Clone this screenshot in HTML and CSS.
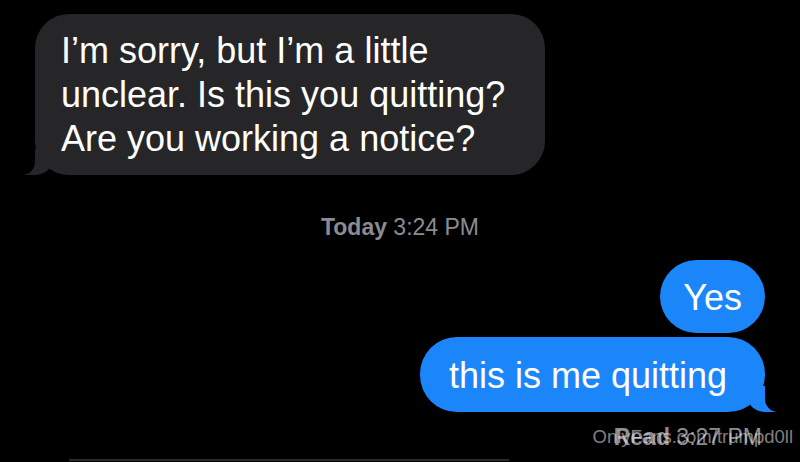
FILE: index.html
```html
<!DOCTYPE html>
<html>
<head>
    <link rel="stylesheet" href="styles.css">
</head>
<body>
    <div id="thread">
        <div class="bubble received tail">I’m sorry, but I’m a little unclear. Is this you quitting? Are you working a notice?</div>

        <p class="stamp"><b>Today</b> 3:24 PM</p>

        <div class="bubble sent yes">Yes</div>
        <div class="bubble sent tail quit">this is me quitting</div>

        <p class="receipt"><b>Read</b> 3:27 PM</p>

        <div class="next"></div>
    </div>

    <p id="watermark">OnlyFans.com/trumpd0ll</p>
</body>
</html>
```

FILE: styles.css
```css
body {
    background-color: #000;
    margin: 0;
    height: 462px;
    overflow: hidden;
    position: relative;
    font-family: "Liberation Sans", Arial, sans-serif;
}

#thread {
    display: flex;
    flex-direction: column;
    padding: 14px 35px 0 35px;
}

.bubble {
    position: relative;
    font-size: 36px;
    line-height: 44px;
    color: #fff;
    border-radius: 34px;
}

.received {
    align-self: flex-start;
    max-width: 510px;
    box-sizing: border-box;
    background-color: #262628;
    padding: 15px 34px 14px 26px;
}

.sent {
    align-self: flex-end;
    background-color: #1b86f9;
    border-radius: 37px;
}

/* tail: coloured blob, then a black blob with a rounded corner cuts it */
.tail::before,
.tail::after {
    content: "";
    position: absolute;
    bottom: 0;
    height: 26px;
}

.received.tail::before {
    left: -13px;
    width: 30px;
    background-color: #262628;
    border-bottom-right-radius: 18px 14px;
}

.received.tail::after {
    left: -32px;
    width: 32px;
    background-color: #000;
    border-bottom-right-radius: 13px;
}

.sent.tail::before {
    right: -13px;
    width: 30px;
    background-color: #1b86f9;
    border-bottom-left-radius: 18px 14px;
}

.sent.tail::after {
    right: -32px;
    width: 32px;
    background-color: #000;
    border-bottom-left-radius: 13px;
}

.stamp {
    align-self: center;
    margin: 38px 0 0 0;
    font-size: 23px;
    line-height: 28px;
    color: #8c8c90;
}

.stamp b,
.receipt b {
    font-weight: 700;
}

.yes {
    margin-top: 19px;
    padding: 16px 23px 13px 23px;
}

.quit {
    margin-top: 4px;
    padding: 17px 38px 14px 29px;
}

.receipt {
    align-self: flex-end;
    margin: 11px 3px 0 0;
    font-size: 23px;
    line-height: 28px;
    color: #8c8c90;
}

/* top edge of the next bubble, cut off by the screen */
.next {
    width: 440px;
    height: 2px;
    margin: 8px 0 0 34px;
    background-color: #2a2a2c;
}

#watermark {
    position: absolute;
    right: 7px;
    top: 426px;
    margin: 0;
    font-size: 18.5px;
    line-height: 22px;
    color: rgba(255, 255, 255, 0.5);
}
```
